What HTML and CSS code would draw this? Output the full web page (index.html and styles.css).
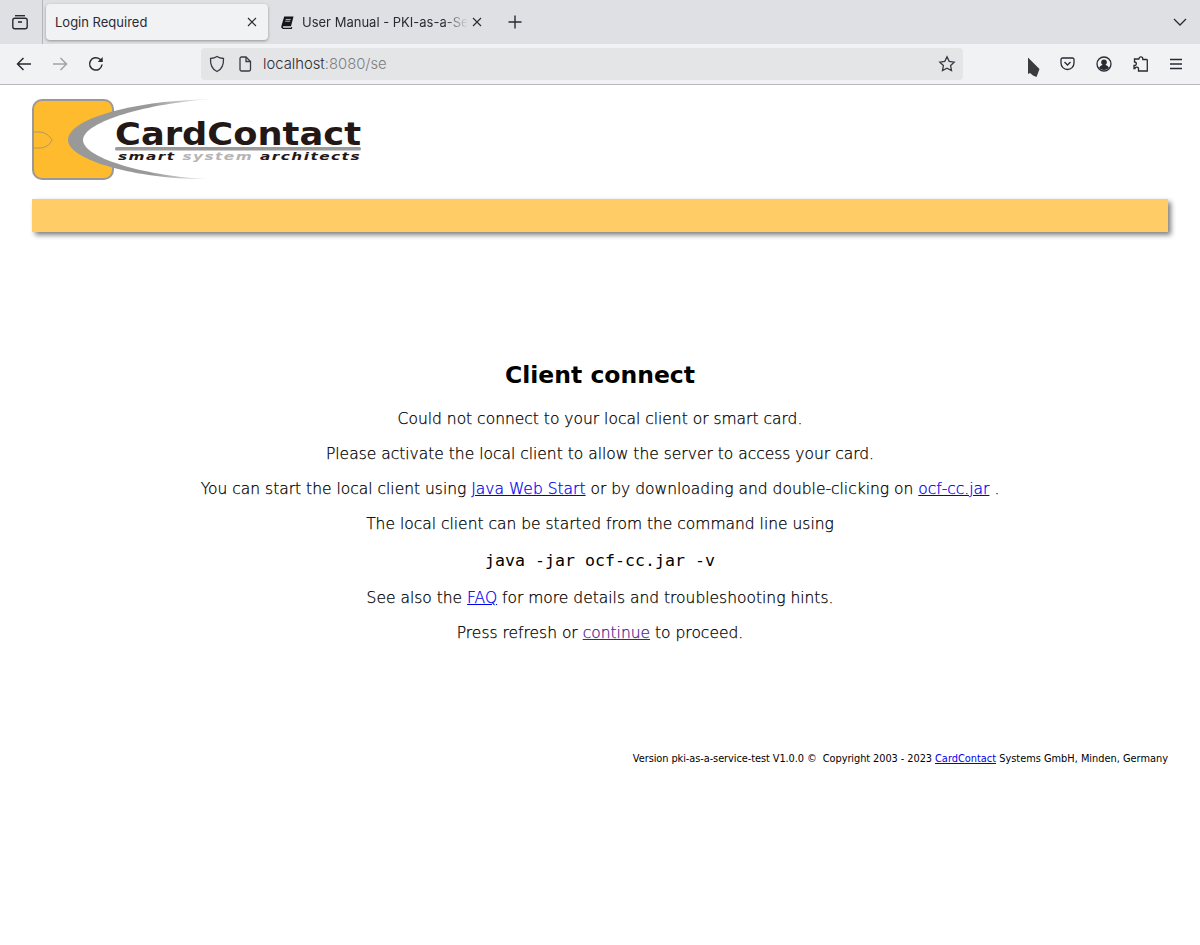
FILE: index.html
```html
<!DOCTYPE html>
<html lang="en">
<head>
    <meta charset="UTF-8">
    <meta name="viewport" content="width=device-width, initial-scale=1.0">
    <title>Login Required</title>
    <link rel="stylesheet" href="styles.css">
</head>
<body>
    <div class="browser">
        <div class="tabstrip">
            <div class="tab-tool">
                <svg width="18" height="18" viewBox="0 0 18 18" fill="none" stroke="#2b2a33" stroke-width="1.4"><path d="M4 2.7h10"/><rect x="1.8" y="5.2" width="14.4" height="10.6" rx="2"/><path d="M7 9h4" stroke-width="1.6"/></svg>
            </div>
            <div class="tab tab-active">
                <span class="tab-title">Login Required</span>
                <svg class="tab-close" width="10" height="10" viewBox="0 0 10 10" stroke="#2b2a33" stroke-width="1.1"><path d="M1 1l8 8M9 1l-8 8"/></svg>
            </div>
            <div class="tab tab-second">
                <svg class="tab-icon" width="13" height="13" viewBox="0 0 13 13"><path d="M3.200 .5h9.300L10 10.200H2.600c-1 0-1 1.600 0 1.600H10l.3-.9h1l-.5 2H2.200C.6 12.900 0 11.600.4 10.100z" fill="#15141a"/><path d="M4.700 3.400h5M4.200 5.200h5" stroke="#fff" stroke-width=".7"/></svg>
                <span class="tab-title tab-fade">User Manual - PKI-as-a-Se</span>
                <svg class="tab-close" width="10" height="10" viewBox="0 0 10 10" stroke="#2b2a33" stroke-width="1.1"><path d="M1 1l8 8M9 1l-8 8"/></svg>
            </div>
            <svg class="new-tab" width="14" height="14" viewBox="0 0 14 14" stroke="#2b2a33" stroke-width="1.4"><path d="M7 .5v13M.5 7h13"/></svg>
            <svg class="tab-list" width="14" height="8" viewBox="0 0 14 8" fill="none" stroke="#2b2a33" stroke-width="1.3"><path d="M1 1l6 6 6-6"/></svg>
        </div>
        <div class="toolbar">
            <div class="nav-buttons">
                <svg width="16" height="16" viewBox="0 0 16 16" fill="none" stroke="#2b2a33" stroke-width="1.5"><path d="M15 8H1.500M7.500 2L1.500 8l6 6"/></svg>
                <svg width="16" height="16" viewBox="0 0 16 16" fill="none" stroke="#a3a3a8" stroke-width="1.5"><path d="M1 8h13.500M8.500 2l6 6-6 6"/></svg>
                <svg width="16" height="16" viewBox="0 0 16 16" fill="none" stroke="#2b2a33" stroke-width="1.5"><path d="M14 8.500A6.200 6.200 0 1 1 12 3.300L14.300 5.500"/><path d="M14.700 1v5h-5" fill="#2b2a33" stroke="none"/></svg>
            </div>
            <div class="urlbar">
                <svg width="16" height="18" viewBox="0 0 16 18" fill="none" stroke="#3a3944" stroke-width="1.3"><path d="M8 1.500c2 1.300 4 1.800 6.500 2 .3 6-1.500 10.800-6.500 13-5-2.200-6.800-7-6.500-13 2.500-.2 4.500-.7 6.500-2z"/></svg>
                <svg class="url-page" width="14" height="16" viewBox="0 0 14 16" fill="none" stroke="#3a3944" stroke-width="1.3"><path d="M2 2.500A1.500 1.500 0 0 1 3.500 1H8l4.500 4.500v8A1.500 1.500 0 0 1 11 15H3.500A1.500 1.500 0 0 1 2 13.500z"/><path d="M8 1v4.500h4.500"/></svg>
                <span class="url-text">localhost<span class="url-rest">:8080/se</span></span>
                <svg class="url-star" width="18" height="18" viewBox="0 0 18 18" fill="none" stroke="#3a3944" stroke-width="1.3"><path d="M9 1.800l2.200 4.600 5 .7-3.600 3.500.9 5L9 13.200l-4.500 2.400.9-5L1.800 7.100l5-.7z"/></svg>
            </div>
            <div class="tools">
                <svg width="15" height="14" viewBox="0 0 15 14" fill="none" stroke="#2b2a33" stroke-width="1.3"><path d="M1 2.500A1.500 1.500 0 0 1 2.500 1h10A1.500 1.500 0 0 1 14 2.500V6a6.500 6.500 0 0 1-13 0z"/><path d="M4.500 5l3 3 3-3"/></svg>
                <svg width="16" height="16" viewBox="0 0 16 16"><circle cx="8" cy="8" r="7" fill="none" stroke="#2b2a33" stroke-width="1.3"/><circle cx="8" cy="6.200" r="2.800" fill="#2b2a33"/><path d="M3 12c1-2.500 3-3 5-3s4 .5 5 3c-1.300 1.300-3 2-5 2s-3.700-.7-5-2z" fill="#2b2a33"/></svg>
                <svg width="15" height="16" viewBox="0 0 15 16" fill="none" stroke="#2b2a33" stroke-width="1.3"><path d="M6 3.500V2.800a1.900 1.900 0 0 1 3.800 0v.7h3.700a.8.8 0 0 1 .8.800V15H5.500v-2a1.800 1.800 0 0 0-3.600-.3H1v-3.200h1a1.800 1.800 0 0 0 0-3.500H1.500v-3h4.500z"/></svg>
                <svg width="14" height="12" viewBox="0 0 14 12" stroke="#2b2a33" stroke-width="1.3"><path d="M1 1.500h12M1 6h12M1 10.500h12"/></svg>
            </div>
        </div>
    </div>

    <svg class="cursor" width="14" height="21" viewBox="0 0 14 21"><path d="M1 .5L12.500 12 9.500 20 6 18.500 3 16 1 17z" fill="#3c3c3c"/></svg>

    <div class="page">
        <div class="logo">
            <svg width="330" height="82" viewBox="0 0 330 82">
                <defs>
                    <linearGradient id="swoosh" x1="0" x2="1" y1="0" y2="0">
                        <stop offset="0.6" stop-color="#999"/>
                        <stop offset="1" stop-color="#eee"/>
                    </linearGradient>
                </defs>
                <rect x="1" y="1" width="80" height="79" rx="9" fill="#fdbb2d" stroke="#999" stroke-width="2"/>
                <path d="M1 33h6c6 0 11 4 13 8-2 5-7 8-13 8H1" fill="none" stroke="#b09a60" stroke-width="1"/>
                <path d="M176 .5C110 1 36 18 36 41c0 21 74 40 140 39z" fill="url(#swoosh)"/>
                <path d="M176 .5C120 4 51 22 51 41c0 19 69 37 125 39z" fill="#fff"/>
                <text class="logo-name" x="83" y="46" textLength="246" lengthAdjust="spacingAndGlyphs">CardContact</text>
                <rect x="83" y="48" width="246" height="3.500" rx="1.500" fill="#9a9a9a"/>
                <text class="logo-tag" x="86" y="60.500" textLength="243" lengthAdjust="spacingAndGlyphs">smart <tspan fill="#b5b5b5">system</tspan> architects</text>
            </svg>
        </div>
        <div class="bar"></div>
        <div class="content">
            <h1>Client connect</h1>
            <p>Could not connect to your local client or smart card.</p>
            <p>Please activate the local client to allow the server to access your card.</p>
            <p>You can start the local client using <a href="#">Java Web Start</a> or by downloading and double-clicking on <a href="#">ocf-cc.jar</a> .</p>
            <p>The local client can be started from the command line using</p>
            <pre>java -jar ocf-cc.jar -v</pre>
            <p>See also the <a href="#">FAQ</a> for more details and troubleshooting hints.</p>
            <p>Press refresh or <a href="#" class="visited">continue</a> to proceed.</p>
        </div>
        <div class="footer"><span class="footer-lead">Version pki-as-a-service-test V1.0.0 &copy;&nbsp; Copyright 2003 - 2023 </span><a href="#">CardContact</a> Systems GmbH, Minden, Germany</div>
    </div>
</body>
</html>
```

FILE: styles.css
```css
body {
    margin: 0;
    background-color: white;
    font-family: "DejaVu Sans", sans-serif;
    color: black;
    overflow: hidden;
}

.browser {
    font-family: Inter, sans-serif;
    color: #15141a;
}

.browser svg {
    flex-shrink: 0;
}

.tabstrip {
    height: 44px;
    background-color: #dfe0e3;
    display: flex;
    align-items: center;
}

.tab-tool {
    width: 40px;
    height: 44px;
    padding-right: 2px;
    border-right: 1px solid #b4b5b8;
    margin-right: 3px;
    display: flex;
    align-items: center;
    justify-content: center;
}

.tab {
    height: 36px;
    padding: 0 11px 0 9px;
    box-sizing: border-box;
    display: flex;
    align-items: center;
    gap: 8px;
    font-size: 13px;
    color: #2b2a33;
}

.tab-active {
    width: 222px;
    background-color: #f1f2f4;
    border-radius: 4px;
    box-shadow: 0 1px 3px rgba(0,0,0,0.35);
    margin-right: 4px;
}

.tab-second {
    width: 221px;
}

.tab-title {
    flex: 1;
    min-width: 0;
    white-space: nowrap;
}

.tab-fade {
    margin-right: -4px;
    -webkit-mask-image: linear-gradient(to right, black 85%, transparent);
    mask-image: linear-gradient(to right, black 85%, transparent);
}

.new-tab {
    margin-left: 15px;
}

.tab-list {
    margin-left: auto;
    margin-right: 13px;
}

.toolbar {
    height: 40px;
    background-color: #f1f2f4;
    border-bottom: 1px solid #b8b8bb;
    display: flex;
    align-items: center;
    position: relative;
}

.nav-buttons {
    width: 201px;
    padding-left: 16px;
    box-sizing: border-box;
    display: flex;
    gap: 20px;
}

.urlbar {
    width: 762px;
    height: 32px;
    background-color: #e4e5e7;
    border-radius: 4px;
    box-sizing: border-box;
    padding: 0 7px 0 8px;
    display: flex;
    align-items: center;
    font-size: 14.8px;
    font-weight: 300;
}

.url-page {
    margin-left: 13px;
}

.url-text {
    margin-left: 11px;
    color: #2b2a33;
    flex: 1;
}

.url-rest {
    color: #7d7d83;
}

.tools {
    margin-left: auto;
    padding-right: 17px;
    display: flex;
    align-items: center;
    gap: 21px;
}

.cursor {
    position: absolute;
    left: 1027px;
    top: 57px;
}

.page {
    padding: 14px 32px 0;
}

.logo {
    height: 100px;
}

.logo-name {
    font-family: "DejaVu Sans", sans-serif;
    font-weight: bold;
    font-size: 32px;
    fill: #231815;
}

.logo-tag {
    font-family: "DejaVu Sans", sans-serif;
    font-weight: bold;
    font-style: italic;
    font-size: 10.5px;
    letter-spacing: 1px;
    fill: #231815;
}

.bar {
    height: 33px;
    background-color: #ffcc66;
    box-shadow: 3px 3px 5px #808080;
}

.content {
    margin-top: 129px;
    text-align: center;
    font-size: 15.5px;
    font-weight: 200;
    -webkit-text-stroke-width: 0.25px;
}

h1 {
    font-size: 23.5px;
    font-weight: bold;
    line-height: 28px;
    margin: 0 0 21px;
    -webkit-text-stroke-width: 0;
}

p {
    margin: 0 0 16px;
    line-height: 19px;
}

pre {
    font-family: "DejaVu Sans Mono", monospace;
    font-size: 16.6px;
    font-weight: normal;
    line-height: 19px;
    margin: 17px 0 19px;
    -webkit-text-stroke-width: 0;
}

.footer {
    margin-top: 110px;
    text-align: right;
    font-size: 9.8px;
}

.footer-lead {
    letter-spacing: -0.07px;
}

a {
    color: #0000ee;
}

a.visited {
    color: #551a8b;
}
```
